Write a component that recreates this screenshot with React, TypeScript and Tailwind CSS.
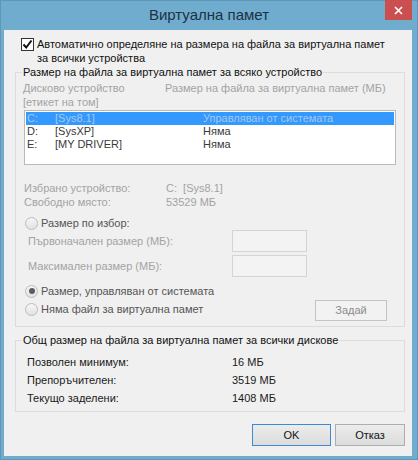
import React from "react";

const FONT = { fontFamily: '"Liberation Sans", Arial, sans-serif' };

function Radio({ checked = false }: { checked?: boolean }) {
  return (
    <span className="flex h-[13px] w-[13px] shrink-0 items-center justify-center rounded-full border border-[#bcbcbc] bg-gradient-to-b from-[#f6f6f6] to-[#e2e2e2]">
      {checked && <span className="h-[6px] w-[6px] rounded-full bg-[#5c5c5c]" />}
    </span>
  );
}

function Disk({
  drive,
  label,
  size,
  selected = false,
}: {
  drive: string;
  label: string;
  size: string;
  selected?: boolean;
}) {
  return (
    <div
      className={`grid h-[13px] grid-cols-[28px_148px_1fr] pl-[1px] leading-[13px] ${
        selected ? "bg-[#3399ff] text-[#a6c8ee]" : "text-[#3a3a3a]"
      }`}
    >
      <span>{drive}</span>
      <span>{label}</span>
      <span>{size}</span>
    </div>
  );
}

function SizeField({ label, className = "" }: { label: string; className?: string }) {
  return (
    <div className={`flex items-center ${className}`}>
      <span className="ml-[5px] w-[204px] text-[#a3a3a3]">{label}</span>
      <span className="h-[22px] w-[75px] border border-[#d4d4d4] bg-[#f3f3f3]" />
    </div>
  );
}

function Total({ label, value }: { label: string; value: string }) {
  return (
    <div className="ml-[4px] flex h-[18px] leading-[18px] text-[#1a1a1a]">
      <span className="w-[205px]">{label}</span>
      <span>{value}</span>
    </div>
  );
}

export default function App() {
  return (
    <div
      className="flex h-[460px] w-[418px] flex-col border border-[#5e97b8] bg-[#70acce] text-[11px]"
      style={FONT}
    >
      {/* title bar */}
      <div className="relative flex h-[29px] shrink-0 items-center justify-center">
        <span className="text-[15px] text-[#1d3144]">Виртуална памет</span>
        <button className="absolute right-[5px] top-[-1px] flex h-[20px] w-[27px] items-center justify-center bg-[#c9504e]">
          <svg width="9" height="9" viewBox="0 0 9 9">
            <path d="M1 1L8 8M8 1L1 8" stroke="white" strokeWidth="1.6" />
          </svg>
        </button>
      </div>

      <div className="mb-[3px] ml-[3px] mr-[5px] flex flex-1 flex-col bg-[#f0f0f0] pl-[11px] pr-[7px] pt-[7px]">
        {/* auto manage */}
        <div className="flex items-start">
          <span className="ml-[6px] mt-[1px] flex h-[13px] w-[13px] shrink-0 items-center justify-center border border-[#333] bg-white">
            <svg width="11" height="11" viewBox="0 0 11 11">
              <path d="M1.5 5.5L4.2 8.5L9.5 1.5" fill="none" stroke="#111" strokeWidth="2" />
            </svg>
          </span>
          <div className="ml-[3px] whitespace-nowrap leading-[14px] text-[#111]">
            Автоматично определяне на размера на файла за виртуална памет
            <br />
            за всички устройства
          </div>
        </div>

        {/* per-device */}
        <fieldset className="border border-[#dcdcdc] px-[7px] pb-[5px]">
          <legend className="ml-[-1px] px-[1px] leading-[14px] text-[#111]">
            Размер на файла за виртуална памет за всяко устройство
          </legend>
          <div className="mt-[2px] flex whitespace-nowrap leading-[14px] text-[#a3a3a3]">
            <div className="w-[142px]">
              <div>Дисково устройство</div>
              <div>[етикет на том]</div>
            </div>
            <div>Размер на файла за виртуална памет (МБ)</div>
          </div>

          <div className="ml-[1px] mt-[1px] h-[55px] w-[372px] border border-[#b9b9b9] bg-white p-[1px]">
            <Disk drive="C:" label="[Sys8.1]" size="Управляван от системата" selected />
            <Disk drive="D:" label="[SysXP]" size="Няма" />
            <Disk drive="E:" label="[MY DRIVER]" size="Няма" />
          </div>

          <div className="ml-[1px] mt-[16px] flex leading-[14px] text-[#a3a3a3]">
            <div className="w-[142px]">
              <div>Избрано устройство:</div>
              <div>Свободно място:</div>
            </div>
            <div>
              <div>C:&nbsp; [Sys8.1]</div>
              <div>53529 МБ</div>
            </div>
          </div>

          <div className="ml-[2px] mt-[7px] flex h-[14px] items-center gap-[3px] text-[#555]">
            <Radio />
            <span>Размер по избор:</span>
          </div>
          <SizeField label="Първоначален размер (МБ):" />
          <SizeField label="Максимален размер (МБ):" className="mt-[3px]" />

          <div className="ml-[2px] mt-[7px] flex h-[14px] items-center gap-[3px] text-[#555]">
            <Radio checked />
            <span>Размер, управляван от системата</span>
          </div>
          <div className="mt-[2px] flex items-start">
            <div className="ml-[2px] mt-[2px] flex h-[14px] items-center gap-[3px] text-[#555]">
              <Radio />
              <span>Няма файл за виртуална памет</span>
            </div>
            <button className="ml-auto mr-[10px] h-[21px] w-[72px] border border-[#c4c4c4] bg-[#f2f2f2] text-[#8c8c8c]">
              Задай
            </button>
          </div>
        </fieldset>

        {/* totals */}
        <fieldset className="mt-[6px] border border-[#dcdcdc] px-[7px] pb-[4px]">
          <legend className="ml-[-1px] px-[1px] leading-[14px] text-[#111]">
            Общ размер на файла за виртуална памет за всички дискове
          </legend>
          <div className="mt-[6px]">
            <Total label="Позволен минимум:" value="16 МБ" />
            <Total label="Препоръчителен:" value="3519 МБ" />
            <Total label="Текущо заделени:" value="1408 МБ" />
          </div>
        </fieldset>

        <div className="mt-[12px] flex justify-end gap-[4px]">
          <button className="h-[22px] w-[79px] border border-[#3c8ad0] bg-gradient-to-b from-[#ececec] to-[#dcdcdc] text-[#111]">
            OK
          </button>
          <button className="h-[22px] w-[70px] border border-[#adadad] bg-gradient-to-b from-[#ececec] to-[#dcdcdc] text-[#111]">
            Отказ
          </button>
        </div>
      </div>
    </div>
  );
}
